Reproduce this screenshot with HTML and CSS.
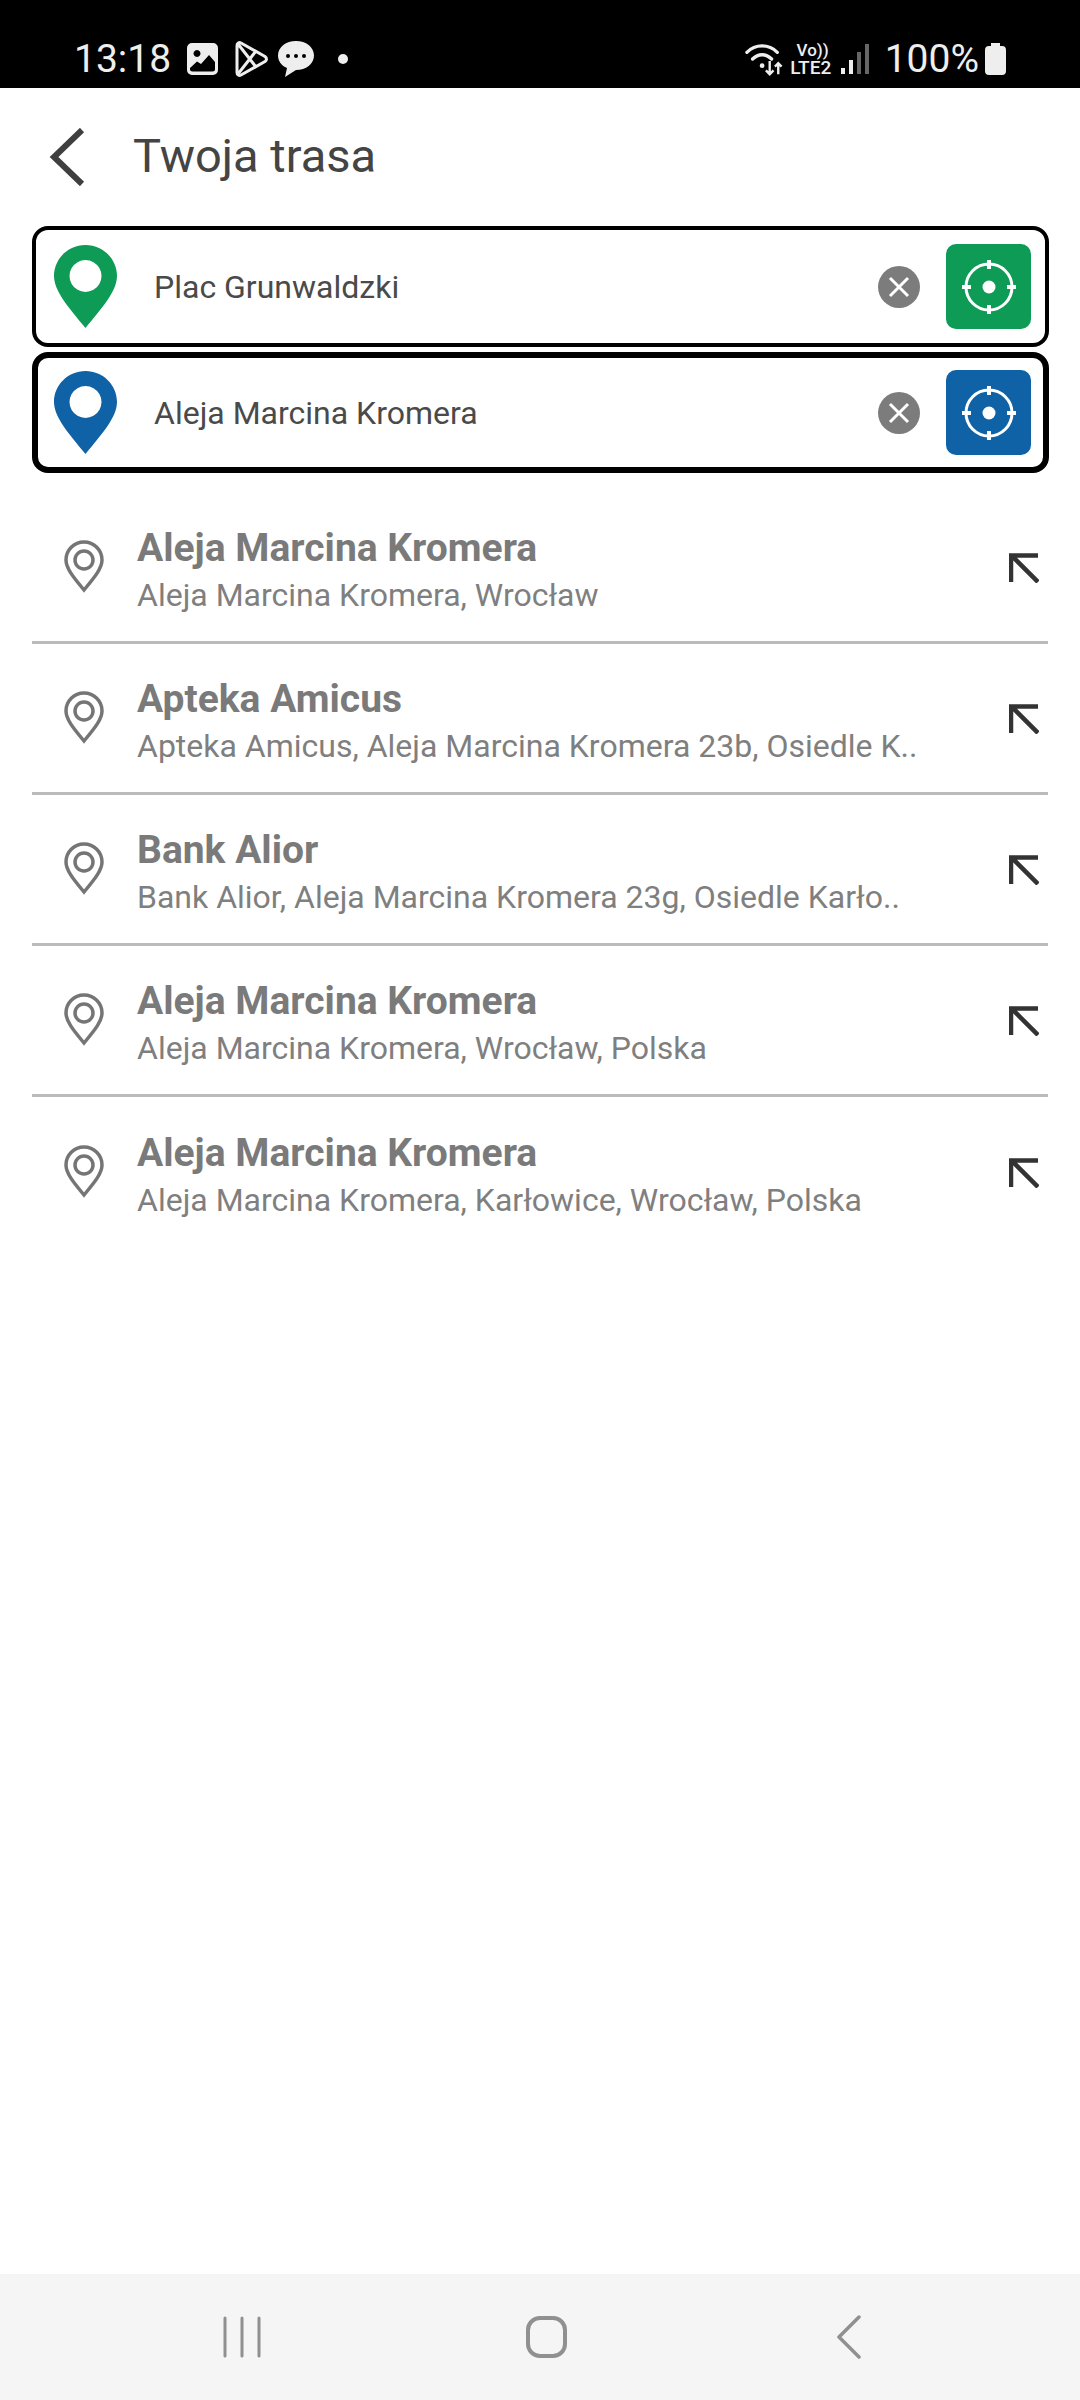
FILE: index.html
```html
<!DOCTYPE html>
<html lang="pl">
<head>
  <meta charset="UTF-8">
  <meta name="viewport" content="width=device-width, initial-scale=1.0">
  <title>Twoja trasa</title>
  <link rel="stylesheet" href="styles.css">
</head>
<body>
  <div class="statusbar">
    <div class="status-left">
      <span class="clock">13:18</span>
      <svg class="ico-gallery" width="31" height="32" viewBox="0 0 31 32">
        <path fill="#eee" fill-rule="evenodd" d="M5 0H26a5 5 0 0 1 5 5V27a5 5 0 0 1-5 5H5a5 5 0 0 1-5-5V5a5 5 0 0 1 5-5ZM10 7a3.500 3.500 0 1 0 .01 0ZM3 25 10 18.500 14 21 22 12 28 19V26a2.500 2.500 0 0 1-2.500 2.500H5.500A2.500 2.500 0 0 1 3 26Z"/>
      </svg>
      <svg class="ico-play" width="33" height="36" viewBox="0 0 33 36">
        <path fill="none" stroke="#eee" stroke-width="3" stroke-linejoin="round" d="M2 4.500C2 2 4 1 6 2L30 15.500C32 17 32 19 30 20.500L6 34C4 35 2 34 2 31.500ZM3 3 21 26M3 33 21 10"/>
      </svg>
      <svg class="ico-chat" width="36" height="36" viewBox="0 0 36 36">
        <path fill="#eee" d="M18 0C28 0 36 6 36 14.500 36 23 28 29 18 29L7 36 9 27C3.500 25 0 20 0 14.500 0 6 8 0 18 0Z"/>
        <circle cx="10" cy="15" r="2" fill="#000"/>
        <circle cx="18" cy="15" r="2" fill="#000"/>
        <circle cx="26" cy="15" r="2" fill="#000"/>
      </svg>
      <span class="notif-dot"></span>
    </div>
    <div class="status-right">
      <svg class="ico-wifi" width="38" height="34" viewBox="0 0 40 34">
        <g fill="none" stroke="#eee" stroke-width="3.500" stroke-linecap="round">
          <path d="M2 10C11 1 25 1 34 10"/>
          <path d="M8 17C14 11 22 11 28 17"/>
        </g>
        <circle cx="18" cy="24" r="2.500" fill="#eee"/>
        <path fill="none" stroke="#eee" stroke-width="2.500" d="M26 19V33M22 29 26 33 30 29M35 33V22M31.500 25 35 21.500 38.500 25"/>
      </svg>
      <div class="volte">
        <span class="vo">Vo))</span>
        <span class="lte">LTE2</span>
      </div>
      <svg class="ico-signal" width="28" height="30" viewBox="0 0 28 30">
        <rect x="0" y="24" width="4" height="6" fill="#eee"/>
        <rect x="8" y="16" width="4" height="14" fill="#eee"/>
        <rect x="16" y="8" width="4" height="22" fill="#666"/>
        <rect x="24" y="0" width="4" height="30" fill="#666"/>
      </svg>
      <span class="battery-text">100%</span>
      <svg class="ico-battery" width="21" height="32" viewBox="0 0 21 32">
        <path fill="#eee" d="M6 0H15V3H17A4 4 0 0 1 21 7V28A4 4 0 0 1 17 32H4A4 4 0 0 1 0 28V7A4 4 0 0 1 4 3H6Z"/>
      </svg>
    </div>
  </div>

  <main class="screen">
    <header class="topbar">
      <svg class="back" width="36" height="58" viewBox="0 0 36 58">
        <path fill="none" stroke="#3f3f3f" stroke-width="6" d="M33 2 5 29 33 56"/>
      </svg>
      <h1>Twoja trasa</h1>
    </header>

    <section class="route">
      <div class="field">
        <svg class="pin" width="63" height="83" viewBox="0 0 63 83">
          <path class="pin-green" fill-rule="evenodd" d="M31.500 0C49 0 63 14 63 31 63 46 48 63 31.500 83 15 63 0 46 0 31 0 14 14 0 31.500 0ZM31.500 15a16 16 0 1 0 .01 0Z"/>
        </svg>
        <span class="field-text">Plac Grunwaldzki</span>
        <button class="clear">
          <svg width="42" height="42" viewBox="0 0 42 42">
            <circle cx="21" cy="21" r="21" fill="#7c7c7c"/>
            <path stroke="#fff" stroke-width="3" d="M12 12 30 30M30 12 12 30"/>
          </svg>
        </button>
        <button class="locate locate-green">
          <svg width="54" height="54" viewBox="0 0 54 54">
            <circle cx="27" cy="27" r="23" fill="none" stroke="#fff" stroke-width="3"/>
            <circle cx="27" cy="27" r="6.500" fill="#fff"/>
            <path stroke="#fff" stroke-width="4" d="M27 0V9M27 45V54M0 27H9M45 27H54"/>
          </svg>
        </button>
      </div>

      <div class="field field-active">
        <svg class="pin" width="63" height="83" viewBox="0 0 63 83">
          <path class="pin-blue" fill-rule="evenodd" d="M31.500 0C49 0 63 14 63 31 63 46 48 63 31.500 83 15 63 0 46 0 31 0 14 14 0 31.500 0ZM31.500 15a16 16 0 1 0 .01 0Z"/>
        </svg>
        <span class="field-text">Aleja Marcina Kromera</span>
        <button class="clear">
          <svg width="42" height="42" viewBox="0 0 42 42">
            <circle cx="21" cy="21" r="21" fill="#7c7c7c"/>
            <path stroke="#fff" stroke-width="3" d="M12 12 30 30M30 12 12 30"/>
          </svg>
        </button>
        <button class="locate locate-blue">
          <svg width="54" height="54" viewBox="0 0 54 54">
            <circle cx="27" cy="27" r="23" fill="none" stroke="#fff" stroke-width="3"/>
            <circle cx="27" cy="27" r="6.500" fill="#fff"/>
            <path stroke="#fff" stroke-width="4" d="M27 0V9M27 45V54M0 27H9M45 27H54"/>
          </svg>
        </button>
      </div>
    </section>

    <ul class="results">
      <li class="result">
        <svg class="result-pin" width="40" height="53" viewBox="0 0 40 53">
          <path fill="none" stroke="#757575" stroke-width="3.500" d="M20 2C30 2 38 10 38 20 38 29 29 39 20 50 11 39 2 29 2 20 2 10 10 2 20 2Z"/>
          <circle cx="20" cy="20" r="9" fill="none" stroke="#757575" stroke-width="3.500"/>
        </svg>
        <div class="result-text">
          <div class="result-title">Aleja Marcina Kromera</div>
          <div class="result-sub">Aleja Marcina Kromera, Wrocław</div>
        </div>
        <svg class="fill-arrow" width="30" height="30" viewBox="0 0 30 30">
          <path fill="none" stroke="#333" stroke-width="4.500" d="M2 29V2.500H29M2.500 2.500 29 29"/>
        </svg>
      </li>
      <li class="result">
        <svg class="result-pin" width="40" height="53" viewBox="0 0 40 53">
          <path fill="none" stroke="#757575" stroke-width="3.500" d="M20 2C30 2 38 10 38 20 38 29 29 39 20 50 11 39 2 29 2 20 2 10 10 2 20 2Z"/>
          <circle cx="20" cy="20" r="9" fill="none" stroke="#757575" stroke-width="3.500"/>
        </svg>
        <div class="result-text">
          <div class="result-title">Apteka Amicus</div>
          <div class="result-sub">Apteka Amicus, Aleja Marcina Kromera 23b, Osiedle K..</div>
        </div>
        <svg class="fill-arrow" width="30" height="30" viewBox="0 0 30 30">
          <path fill="none" stroke="#333" stroke-width="4.500" d="M2 29V2.500H29M2.500 2.500 29 29"/>
        </svg>
      </li>
      <li class="result">
        <svg class="result-pin" width="40" height="53" viewBox="0 0 40 53">
          <path fill="none" stroke="#757575" stroke-width="3.500" d="M20 2C30 2 38 10 38 20 38 29 29 39 20 50 11 39 2 29 2 20 2 10 10 2 20 2Z"/>
          <circle cx="20" cy="20" r="9" fill="none" stroke="#757575" stroke-width="3.500"/>
        </svg>
        <div class="result-text">
          <div class="result-title">Bank Alior</div>
          <div class="result-sub">Bank Alior, Aleja Marcina Kromera 23g, Osiedle Karło..</div>
        </div>
        <svg class="fill-arrow" width="30" height="30" viewBox="0 0 30 30">
          <path fill="none" stroke="#333" stroke-width="4.500" d="M2 29V2.500H29M2.500 2.500 29 29"/>
        </svg>
      </li>
      <li class="result">
        <svg class="result-pin" width="40" height="53" viewBox="0 0 40 53">
          <path fill="none" stroke="#757575" stroke-width="3.500" d="M20 2C30 2 38 10 38 20 38 29 29 39 20 50 11 39 2 29 2 20 2 10 10 2 20 2Z"/>
          <circle cx="20" cy="20" r="9" fill="none" stroke="#757575" stroke-width="3.500"/>
        </svg>
        <div class="result-text">
          <div class="result-title">Aleja Marcina Kromera</div>
          <div class="result-sub">Aleja Marcina Kromera, Wrocław, Polska</div>
        </div>
        <svg class="fill-arrow" width="30" height="30" viewBox="0 0 30 30">
          <path fill="none" stroke="#333" stroke-width="4.500" d="M2 29V2.500H29M2.500 2.500 29 29"/>
        </svg>
      </li>
      <li class="result">
        <svg class="result-pin" width="40" height="53" viewBox="0 0 40 53">
          <path fill="none" stroke="#757575" stroke-width="3.500" d="M20 2C30 2 38 10 38 20 38 29 29 39 20 50 11 39 2 29 2 20 2 10 10 2 20 2Z"/>
          <circle cx="20" cy="20" r="9" fill="none" stroke="#757575" stroke-width="3.500"/>
        </svg>
        <div class="result-text">
          <div class="result-title">Aleja Marcina Kromera</div>
          <div class="result-sub">Aleja Marcina Kromera, Karłowice, Wrocław, Polska</div>
        </div>
        <svg class="fill-arrow" width="30" height="30" viewBox="0 0 30 30">
          <path fill="none" stroke="#333" stroke-width="4.500" d="M2 29V2.500H29M2.500 2.500 29 29"/>
        </svg>
      </li>
    </ul>
  </main>

  <nav class="navbar">
    <svg width="38" height="42" viewBox="0 0 38 42">
      <path stroke="#909090" stroke-width="3" stroke-linecap="round" d="M2 2V40M19 2V40M36 2V40"/>
    </svg>
    <svg class="nav-home" width="41" height="42" viewBox="0 0 41 42">
      <rect x="2" y="2" width="37" height="38" rx="12" fill="none" stroke="#909090" stroke-width="4"/>
    </svg>
    <svg width="24" height="44" viewBox="0 0 24 44">
      <path fill="none" stroke="#909090" stroke-width="3.500" stroke-linecap="round" stroke-linejoin="round" d="M22 2 2 22 22 42"/>
    </svg>
  </nav>
</body>
</html>
```

FILE: styles.css
```css
* {
  box-sizing: border-box;
}
body {
  margin: 0;
  height: 2400px;
  display: flex;
  flex-direction: column;
  background: #fff;
  font-family: Roboto, "Noto Sans", sans-serif;
  overflow: hidden;
}

/* status bar */
.statusbar {
  height: 88px;
  background: #000;
  color: #eee;
  display: flex;
  justify-content: space-between;
  align-items: flex-end;
  padding: 0 74px 9px 74px;
}
.status-left, .status-right {
  display: flex;
  align-items: center;
}
.clock {
  font-size: 39px;
  line-height: 40px;
  width: 113px;
}
.ico-play {
  margin-left: 17px;
}
.ico-chat {
  margin-left: 10px;
}
.notif-dot {
  width: 10px;
  height: 10px;
  border-radius: 50%;
  background: #eee;
  margin-left: 24px;
}
.volte {
  display: flex;
  flex-direction: column;
  align-items: center;
  margin-left: 6px;
  width: 44px;
  line-height: 17px;
}
.vo {
  font-size: 17px;
  font-weight: 500;
  margin-left: 4px;
}
.lte {
  font-size: 19px;
  font-weight: 500;
}
.ico-signal {
  margin-left: 8px;
}
.battery-text {
  font-size: 39px;
  line-height: 40px;
  margin-left: 16px;
}
.ico-battery {
  margin-left: 6px;
}

/* main screen */
.screen {
  flex: 1;
  padding: 0 31px 0 32px;
}
.topbar {
  height: 138px;
  display: flex;
  align-items: center;
  padding-left: 17px;
}
.back {
  flex: none;
}
h1 {
  margin: 0 0 3px 48px;
  font-size: 47px;
  font-weight: 400;
  color: #444;
}

/* start and destination */
.route {
  display: flex;
  flex-direction: column;
  gap: 5px;
}
.field {
  height: 121px;
  border: 4px solid #000;
  border-radius: 16px;
  display: flex;
  align-items: center;
  padding: 0 14px 0 18px;
}
.field-active {
  border-width: 6px;
  padding: 0 12px 0 16px;
}
.pin {
  flex: none;
}
.pin-green {
  fill: #0e9b55;
}
.pin-blue {
  fill: #0f62a5;
}
.field-text {
  flex: 1;
  margin-left: 37px;
  font-size: 32px;
  color: #4a4a4a;
}
.clear, .locate {
  border: none;
  padding: 0;
  background: none;
  display: flex;
  align-items: center;
  justify-content: center;
}
.clear {
  margin-right: 26px;
}
.locate {
  width: 85px;
  height: 85px;
  border-radius: 10px;
}
.locate-green {
  background: #0e9b55;
}
.locate-blue {
  background: #0f62a5;
}

/* search results */
.results {
  list-style: none;
  margin: 20px 1px 0 0;
  padding: 0;
}
.result {
  height: 151px;
  border-bottom: 3px solid #bbb;
  display: flex;
  align-items: center;
  padding-left: 32px;
}
.result:last-child {
  border-bottom: none;
}
.result-pin {
  flex: none;
  margin-top: -2px;
}
.result-text {
  flex: 1;
  margin-left: 33px;
  padding-top: 9px;
}
.result-title {
  font-size: 39px;
  line-height: 47px;
  font-weight: 700;
  color: #7a7a7a;
}
.result-sub {
  font-size: 32px;
  line-height: 47px;
  color: #7f7f7f;
}
.fill-arrow {
  flex: none;
  margin: 1px 9px 0 0;
}

/* system nav */
.navbar {
  height: 126px;
  background: #f5f5f5;
  display: flex;
  justify-content: space-between;
  align-items: center;
  padding: 0 219px 0 223px;
}
.nav-home {
  margin-right: 5px;
}
```
